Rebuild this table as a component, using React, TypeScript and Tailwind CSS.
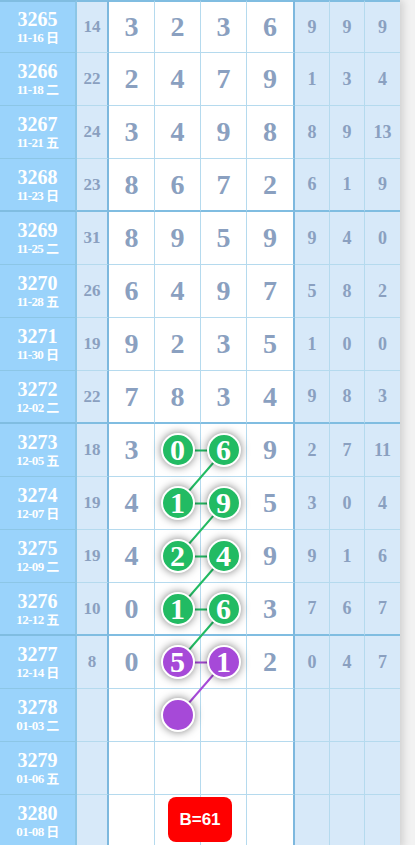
import React from "react";

type Row = {
  id: string;
  date: string;
  sum?: string;
  main: string[];
  tail: string[];
};

const rows: Row[] = [
  { id: "3265", date: "11-16 日", sum: "14", main: ["3", "2", "3", "6"], tail: ["9", "9", "9"] },
  { id: "3266", date: "11-18 二", sum: "22", main: ["2", "4", "7", "9"], tail: ["1", "3", "4"] },
  { id: "3267", date: "11-21 五", sum: "24", main: ["3", "4", "9", "8"], tail: ["8", "9", "13"] },
  { id: "3268", date: "11-23 日", sum: "23", main: ["8", "6", "7", "2"], tail: ["6", "1", "9"] },
  { id: "3269", date: "11-25 二", sum: "31", main: ["8", "9", "5", "9"], tail: ["9", "4", "0"] },
  { id: "3270", date: "11-28 五", sum: "26", main: ["6", "4", "9", "7"], tail: ["5", "8", "2"] },
  { id: "3271", date: "11-30 日", sum: "19", main: ["9", "2", "3", "5"], tail: ["1", "0", "0"] },
  { id: "3272", date: "12-02 二", sum: "22", main: ["7", "8", "3", "4"], tail: ["9", "8", "3"] },
  { id: "3273", date: "12-05 五", sum: "18", main: ["3", "0", "6", "9"], tail: ["2", "7", "11"] },
  { id: "3274", date: "12-07 日", sum: "19", main: ["4", "1", "9", "5"], tail: ["3", "0", "4"] },
  { id: "3275", date: "12-09 二", sum: "19", main: ["4", "2", "4", "9"], tail: ["9", "1", "6"] },
  { id: "3276", date: "12-12 五", sum: "10", main: ["0", "1", "6", "3"], tail: ["7", "6", "7"] },
  { id: "3277", date: "12-14 日", sum: "8", main: ["0", "5", "1", "2"], tail: ["0", "4", "7"] },
  { id: "3278", date: "01-03 二", main: ["", "", "", ""], tail: ["", "", ""] },
  { id: "3279", date: "01-06 五", main: ["", "", "", ""], tail: ["", "", ""] },
  { id: "3280", date: "01-08 日", main: ["", "", "", ""], tail: ["", "", ""] },
];

const RH = 53;
const cy = (i: number) => i * RH + 26.5;

// rows with balls in the middle two columns
const green = [8, 9, 10, 11];
const purple = 12;

const Ball = ({ n, purple }: { n?: string; purple?: boolean }) => (
  <div
    className={`relative z-10 flex h-[34px] w-[34px] items-center justify-center rounded-full border-2 border-white text-[30px] font-bold leading-none text-white shadow-[0_0_8px_rgba(0,0,0,0.5)] ${
      purple ? "bg-[#a649d8]" : "bg-[#22bb63]"
    }`}
  >
    {n}
  </div>
);

const App = () => {
  return (
    <div className="h-[845px] w-[415px] overflow-hidden bg-[#f2f2f2] font-['Liberation_Serif',serif]">
      <div className="relative w-[400px] shadow-[3px_0_8px_rgba(0,0,0,0.15)]">
        {rows.map((r, i) => {
          const groupEnd = i === 3 || i === 7 || i === 11;
          const bb = groupEnd ? "border-b-2 border-b-[#80bde1]" : "border-b border-b-[#b5daee]";
          const top = i === 0 ? "border-t-2 border-t-[#80bde1]" : "";
          const balls = green.includes(i) || i === purple;
          return (
            <div key={r.id} className="flex h-[53px]">
              <div
                className={`flex w-[77px] flex-col items-center justify-center border-r-2 border-r-[#8cc6e6] bg-[#9ad3fb] pb-[1px] font-bold text-white ${top} ${
                  groupEnd ? "border-b-2 border-b-[#80bde1]" : "border-b border-b-[#8cc6e6]"
                }`}
              >
                <span className="text-[20px] leading-[22px]">{r.id}</span>
                <span className="font-['Liberation_Serif','Noto_Sans_CJK_SC',serif] text-[13px] leading-[15px] tracking-[-0.6px]">
                  {r.date}
                </span>
              </div>
              <div
                className={`flex w-[32px] items-center justify-center border-r-2 border-r-[#7db8de] bg-[#d7e9f9] text-[17px] font-bold text-[#8aa0c0] ${bb} ${top}`}
              >
                {r.sum}
              </div>
              {r.main.map((n, j) => (
                <div
                  key={j}
                  className={`relative flex items-center justify-center bg-white font-bold text-[#8aa0c0] ${bb} ${top} ${
                    j === 3 ? "w-[48px] border-r-2 border-r-[#7db8de]" : "w-[46px] border-r border-r-[#b5daee]"
                  } ${balls && (j === 1 || j === 2) ? "" : "text-[28px]"}`}
                >
                  {balls && (j === 1 || j === 2) ? <Ball n={n} purple={i === purple} /> : n}
                  {i === 13 && j === 1 && <Ball purple />}
                  {i === 15 && j === 1 && (
                    <div className="absolute left-[13px] top-[2px] z-10 flex h-[45px] w-[64px] items-center justify-center rounded-lg bg-[#ff0000] font-['Liberation_Sans',sans-serif] text-[17px] font-bold text-white">
                      B=61
                    </div>
                  )}
                </div>
              ))}
              {r.tail.map((n, j) => (
                <div
                  key={j}
                  className={`flex w-[35px] items-center justify-center bg-[#d7e9f9] text-[18px] font-bold text-[#8aa0c0] ${bb} ${top} ${
                    j < 2 ? "border-r border-r-[#b5daee]" : ""
                  }`}
                >
                  {n}
                </div>
              ))}
            </div>
          );
        })}
        <svg className="pointer-events-none absolute left-0 top-0 z-[5]" width="400" height="848">
          {green.map((i) => (
            <line key={"h" + i} x1="178" y1={cy(i)} x2="224" y2={cy(i)} stroke="#22bb63" strokeWidth="2" />
          ))}
          {green.map((i) => (
            <line key={"d" + i} x1="224" y1={cy(i)} x2="178" y2={cy(i + 1)} stroke="#22bb63" strokeWidth="2" />
          ))}
          <line x1="178" y1={cy(12)} x2="224" y2={cy(12)} stroke="#a649d8" strokeWidth="2" />
          <line x1="224" y1={cy(12)} x2="178" y2={cy(13)} stroke="#a649d8" strokeWidth="2" />
        </svg>
      </div>
    </div>
  );
};

export default App;
